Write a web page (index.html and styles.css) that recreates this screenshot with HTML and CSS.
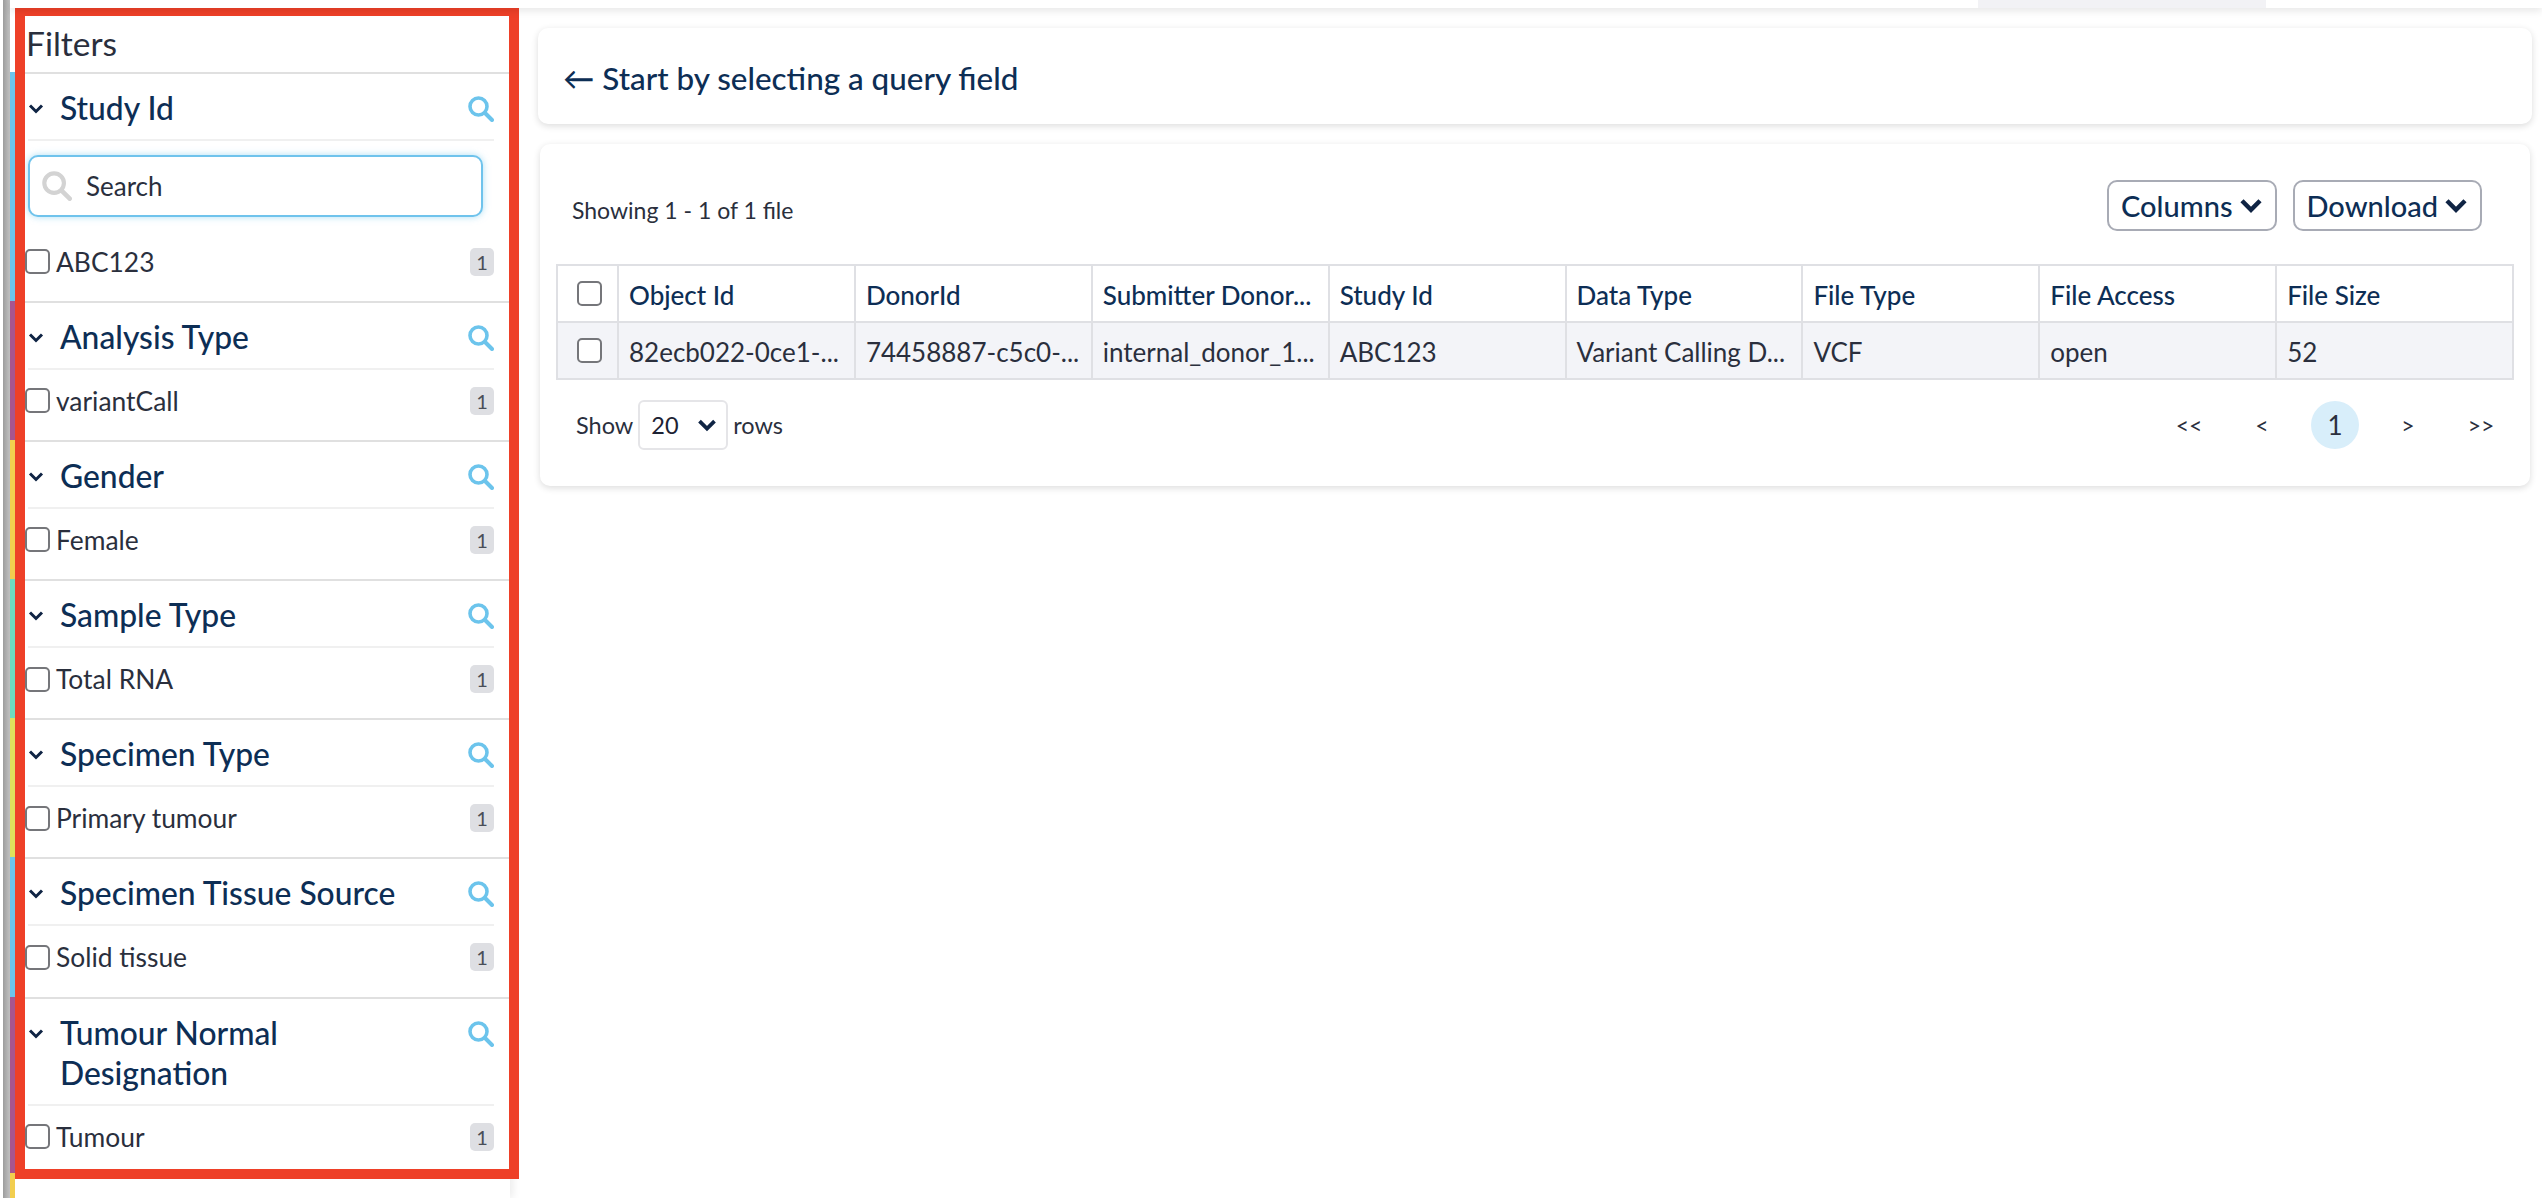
FILE: index.html
```html
<!DOCTYPE html>
<html lang="en">
<head>
    <meta charset="UTF-8">
    <meta name="viewport" content="width=device-width, initial-scale=1.0">
    <title>File Repository</title>
    <link rel="stylesheet" href="styles.css">
</head>
<body>
    <svg class="icon-defs" width="0" height="0">
        <symbol id="i-search" viewBox="0 0 26 26">
            <circle cx="10.5" cy="10.5" r="8.5" fill="none" stroke="currentColor" stroke-width="3.6"/>
            <path d="M17 17l7 7" fill="none" stroke="currentColor" stroke-width="4" stroke-linecap="round"/>
        </symbol>
        <symbol id="i-chevron" viewBox="0 0 16 12">
            <path d="M2 2.5l6 6 6-6" fill="none" stroke="currentColor" stroke-width="3"/>
        </symbol>
    </svg>

    <div class="rail"></div>

    <div class="page">
        <div class="topbar"><div class="topbar-tab"></div></div>

        <div class="content">
            <aside class="sidebar">
                <h2 class="sidebar-title">Filters</h2>

                <section class="group blue">
                    <div class="group-head">
                        <svg class="chevron"><use href="#i-chevron"/></svg>
                        <h3>Study Id</h3>
                        <svg class="search-icon"><use href="#i-search"/></svg>
                    </div>
                    <div class="group-body">
                        <div class="search-box">
                            <svg class="search-box-icon"><use href="#i-search"/></svg>
                            <span>Search</span>
                        </div>
                        <label class="item"><input type="checkbox"><span class="item-name">ABC123</span><span class="badge">1</span></label>
                    </div>
                </section>

                <section class="group purple">
                    <div class="group-head">
                        <svg class="chevron"><use href="#i-chevron"/></svg>
                        <h3>Analysis Type</h3>
                        <svg class="search-icon"><use href="#i-search"/></svg>
                    </div>
                    <div class="group-body">
                        <label class="item"><input type="checkbox"><span class="item-name">variantCall</span><span class="badge">1</span></label>
                    </div>
                </section>

                <section class="group yellow">
                    <div class="group-head">
                        <svg class="chevron"><use href="#i-chevron"/></svg>
                        <h3>Gender</h3>
                        <svg class="search-icon"><use href="#i-search"/></svg>
                    </div>
                    <div class="group-body">
                        <label class="item"><input type="checkbox"><span class="item-name">Female</span><span class="badge">1</span></label>
                    </div>
                </section>

                <section class="group teal">
                    <div class="group-head">
                        <svg class="chevron"><use href="#i-chevron"/></svg>
                        <h3>Sample Type</h3>
                        <svg class="search-icon"><use href="#i-search"/></svg>
                    </div>
                    <div class="group-body">
                        <label class="item"><input type="checkbox"><span class="item-name">Total RNA</span><span class="badge">1</span></label>
                    </div>
                </section>

                <section class="group lime">
                    <div class="group-head">
                        <svg class="chevron"><use href="#i-chevron"/></svg>
                        <h3>Specimen Type</h3>
                        <svg class="search-icon"><use href="#i-search"/></svg>
                    </div>
                    <div class="group-body">
                        <label class="item"><input type="checkbox"><span class="item-name">Primary tumour</span><span class="badge">1</span></label>
                    </div>
                </section>

                <section class="group blue">
                    <div class="group-head">
                        <svg class="chevron"><use href="#i-chevron"/></svg>
                        <h3>Specimen Tissue Source</h3>
                        <svg class="search-icon"><use href="#i-search"/></svg>
                    </div>
                    <div class="group-body">
                        <label class="item"><input type="checkbox"><span class="item-name">Solid tissue</span><span class="badge">1</span></label>
                    </div>
                </section>

                <section class="group purple last">
                    <div class="group-head">
                        <svg class="chevron"><use href="#i-chevron"/></svg>
                        <h3>Tumour Normal Designation</h3>
                        <svg class="search-icon"><use href="#i-search"/></svg>
                    </div>
                    <div class="group-body">
                        <label class="item"><input type="checkbox"><span class="item-name">Tumour</span><span class="badge">1</span></label>
                    </div>
                </section>

                <div class="group yellow tail"></div>
            </aside>

            <main class="main">
                <div class="card query-card">← Start by selecting a query field</div>

                <div class="card table-card">
                    <div class="toolbar">
                        <span class="showing">Showing 1 - 1 of 1 file</span>
                        <div class="toolbar-buttons">
                            <button class="btn" type="button">Columns <svg class="btn-chevron"><use href="#i-chevron"/></svg></button>
                            <button class="btn" type="button">Download <svg class="btn-chevron"><use href="#i-chevron"/></svg></button>
                        </div>
                    </div>

                    <table class="files">
                        <colgroup>
                            <col class="col-check">
                            <col><col><col><col><col><col><col><col>
                        </colgroup>
                        <thead>
                            <tr>
                                <th class="cell-check"><input type="checkbox"></th>
                                <th>Object Id</th>
                                <th>DonorId</th>
                                <th>Submitter Donor...</th>
                                <th>Study Id</th>
                                <th>Data Type</th>
                                <th>File Type</th>
                                <th>File Access</th>
                                <th>File Size</th>
                            </tr>
                        </thead>
                        <tbody>
                            <tr>
                                <td class="cell-check"><input type="checkbox"></td>
                                <td>82ecb022-0ce1-...</td>
                                <td>74458887-c5c0-...</td>
                                <td>internal_donor_1...</td>
                                <td>ABC123</td>
                                <td>Variant Calling D...</td>
                                <td>VCF</td>
                                <td>open</td>
                                <td>52</td>
                            </tr>
                        </tbody>
                    </table>

                    <div class="table-footer">
                        <div class="page-size">
                            <span>Show</span>
                            <div class="select">20 <svg class="select-chevron"><use href="#i-chevron"/></svg></div>
                            <span>rows</span>
                        </div>
                        <div class="pager">
                            <span>&lt;&lt;</span>
                            <span>&lt;</span>
                            <span class="current">1</span>
                            <span>&gt;</span>
                            <span>&gt;&gt;</span>
                        </div>
                    </div>
                </div>
            </main>
        </div>
    </div>

    <!-- red highlight drawn over the filters panel -->
    <div class="highlight"></div>
</body>
</html>
```

FILE: styles.css
```css
/* Global Styles */
* {
    box-sizing: border-box;
    margin: 0;
    padding: 0;
}
body {
    font-family: Lato, "Open Sans", sans-serif;
    background: #fff;
    color: #2a2f3d;
    display: flex;
    height: 100vh;
    overflow: hidden;
    position: relative;
}
.icon-defs {
    position: absolute;
}
.rail {
    width: 7px;
    margin-left: 3px;
    background: linear-gradient(90deg, #9c9c9c, #c4c4c4);
    flex-shrink: 0;
}
.page {
    flex: 1;
    display: flex;
    flex-direction: column;
    min-width: 0;
}

/* Top bar */
.topbar {
    height: 8px;
    background: #fff;
    box-shadow: 0 2px 8px rgba(0, 0, 0, 0.12);
    position: relative;
    z-index: 2;
}
.topbar-tab {
    width: 288px;
    height: 8px;
    margin-left: 1968px;
    background: #f2f2f5;
}
.content {
    flex: 1;
    display: flex;
    min-height: 0;
}

/* Filters */
.sidebar {
    width: 500px;
    flex-shrink: 0;
    display: flex;
    flex-direction: column;
    background: #fff;
    box-shadow: 3px 0 8px rgba(0, 0, 0, 0.08);
}
.sidebar-title {
    height: 64px;
    margin-left: 5px;
    padding: 13px 0 0 11px;
    font-size: 33.5px;
    line-height: 44px;
    font-weight: 400;
    color: #2a2f3d;
}
.group {
    border-left: 5px solid #6cc4ec;
}
.blue { border-left-color: #6cc4ec; }
.purple { border-left-color: #a8558f; }
.yellow { border-left-color: #f2ce4f; }
.teal { border-left-color: #6fdbbd; }
.lime { border-left-color: #dfe05c; }
.tail {
    flex: 1;
}
.group-head {
    position: relative;
    display: flex;
    align-items: flex-start;
    border-top: 2px solid #e0e0e0;
    padding: 14px 16px 0 13px;
}
.group-head::after {
    content: "";
    position: absolute;
    left: 13px;
    right: 16px;
    bottom: 0;
    height: 2px;
    background: #f0f0f0;
}
.group-head h3 {
    flex: 1;
    font-size: 31.8px;
    line-height: 40px;
    font-weight: 500;
    color: #0d2e55;
    padding: 0 20px 13px 0;
    margin-left: 16px;
}
.chevron {
    width: 16px;
    height: 12px;
    margin-top: 15px;
    color: #0f2444;
    flex-shrink: 0;
}
.search-icon {
    width: 26px;
    height: 26px;
    margin-top: 8px;
    color: #6cc4ec;
    flex-shrink: 0;
}
.group-body {
    padding: 17px 16px 25.2px 10px;
}
.last .group-body {
    padding-bottom: 22.5px;
}
.search-box {
    display: flex;
    align-items: center;
    gap: 14px;
    width: 455px;
    height: 62px;
    margin: -3px 0 30.5px 3px;
    padding-left: 12px;
    background: #fff;
    border: 2px solid #6fc3ec;
    border-radius: 10px;
    box-shadow: 0 0 7px rgba(108, 196, 236, 0.55);
    font-size: 26px;
}
.search-box-icon {
    width: 30px;
    height: 30px;
    color: #d3d3d3;
}
.item {
    display: flex;
    align-items: center;
    height: 28px;
    font-size: 26.4px;
    line-height: 28px;
}
.item-name {
    flex: 1;
    margin-left: 6px;
}
input[type="checkbox"] {
    appearance: none;
    display: block;
    width: 25px;
    height: 25px;
    background: #fff;
    border: 2px solid #75767a;
    border-radius: 5px;
    flex-shrink: 0;
}
.badge {
    width: 24px;
    height: 28px;
    background: #dedfe3;
    border-radius: 5px;
    text-align: center;
    font-size: 20px;
    line-height: 28px;
    color: #4a4e58;
}

/* Main column */
.main {
    flex: 1;
    min-width: 0;
    padding: 20px 10px 0 28px;
}
.card {
    background: #fff;
    border-radius: 10px;
    box-shadow: 0 2px 7px rgba(0, 0, 0, 0.14);
}
.query-card {
    height: 96px;
    padding: 3px 25px 0;
    display: flex;
    align-items: center;
    font-size: 31.4px;
    font-weight: 500;
    color: #0d2e55;
}
.table-card {
    height: 342px;
    margin: 20px 2px 0;
    padding: 36px 16px 0;
}
.toolbar {
    height: 51px;
    display: flex;
    justify-content: space-between;
    align-items: center;
    padding: 0 32px 0 16px;
}
.showing {
    font-size: 23px;
    margin-top: 8px;
}
.toolbar-buttons {
    display: flex;
    gap: 16px;
}
.btn {
    height: 51px;
    padding: 0 12px;
    background: #fff;
    border: 2px solid #a8abb5;
    border-radius: 10px;
    font-family: inherit;
    font-size: 29px;
    font-weight: 500;
    color: #0d2e55;
    display: flex;
    align-items: center;
    gap: 6px;
}
.btn-chevron {
    width: 24px;
    height: 18px;
    color: #0f2444;
}

/* Table */
.files {
    width: 100%;
    margin-top: 33px;
    table-layout: fixed;
    border-collapse: collapse;
    font-size: 26px;
}
.col-check {
    width: 61px;
}
.files th,
.files td {
    border: 2px solid #dfe0e4;
    padding: 3px 10px 0;
    text-align: left;
    white-space: nowrap;
}
.files th {
    height: 57px;
    font-weight: 500;
    color: #0d2e55;
}
.files td {
    height: 57px;
    background: #f3f4f8;
}
.files .cell-check {
    padding: 0 0 0 19px;
}

/* Footer */
.table-footer {
    display: flex;
    justify-content: space-between;
    align-items: center;
    margin-top: 20px;
    padding: 0 9px 0 20px;
}
.page-size {
    display: flex;
    align-items: center;
    gap: 5px;
    font-size: 23.5px;
}
.select {
    width: 90px;
    height: 50px;
    padding: 0 9px 0 11px;
    display: flex;
    align-items: center;
    justify-content: space-between;
    border: 2px solid #e5e5e8;
    border-radius: 6px;
    color: #1c2233;
}
.select-chevron {
    width: 20px;
    height: 15px;
    color: #0f2444;
}
.pager {
    display: flex;
    gap: 25px;
    font-size: 23px;
}
.pager span {
    width: 48px;
    height: 48px;
    border-radius: 50%;
    display: flex;
    align-items: center;
    justify-content: center;
}
.pager .current {
    background: #d8eefa;
    font-size: 26px;
}

/* Highlight overlay */
.highlight {
    position: absolute;
    left: 15px;
    top: 6px;
    width: 504px;
    height: 1173px;
    border: 10px solid #ee4028;
    pointer-events: none;
}
```
